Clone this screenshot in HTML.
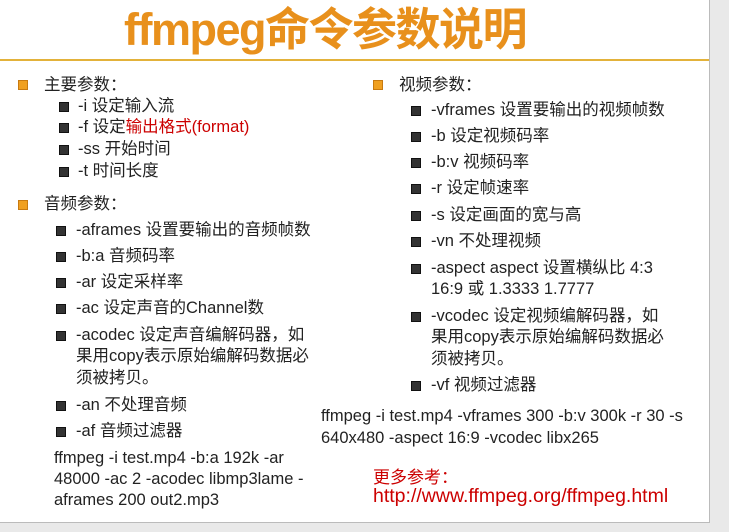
<!DOCTYPE html>
<html><head><meta charset="utf-8"><style>
body{margin:0;width:729px;height:532px;background:#e9e9e9;position:relative;overflow:hidden;font-family:"Liberation Sans","Noto Sans CJK SC",sans-serif;color:#222}
#s{position:absolute;left:0;top:0;width:709px;height:522px;background:#fff;border-right:1px solid #bbb;border-bottom:1px solid #bbb}
.t{position:absolute;white-space:nowrap;font-size:16.5px;line-height:21px}
.ob{position:absolute;width:10px;height:10px;background:#f0a020;border:1px solid #c87a10;box-sizing:border-box}
.bb{position:absolute;width:10px;height:10px;background:#333;border:1px solid #111;box-sizing:border-box}
h1{position:absolute;left:0;width:650px;top:4px;margin:0;text-align:center;font-size:45px;font-weight:bold;color:#e8901c;letter-spacing:-1.5px;line-height:52px}
.line{position:absolute;left:0;top:59px;width:709px;height:2px;background:#e3b23a}
.r{color:#c00}
</style></head><body><div id="s">
<h1>ffmpeg命令参数说明</h1>
<div class="line"></div>

<div class="ob" style="left:18px;top:80px"></div><div class="t" style="left:44px;top:75px">主要参数：</div>
<div class="bb" style="left:59px;top:102px"></div><div class="t" style="left:78px;top:96px">-i 设定输入流</div>
<div class="bb" style="left:59px;top:123px"></div><div class="t" style="left:78px;top:117px">-f 设定<span class="r">输出格式(format)</span></div>
<div class="bb" style="left:59px;top:145px"></div><div class="t" style="left:78px;top:139px">-ss 开始时间</div>
<div class="bb" style="left:59px;top:167px"></div><div class="t" style="left:78px;top:161px">-t 时间长度</div>

<div class="ob" style="left:18px;top:200px"></div><div class="t" style="left:44px;top:194px">音频参数：</div>
<div class="bb" style="left:56px;top:226px"></div><div class="t" style="left:76px;top:220px">-aframes 设置要输出的音频帧数</div>
<div class="bb" style="left:56px;top:252px"></div><div class="t" style="left:76px;top:246px">-b:a 音频码率</div>
<div class="bb" style="left:56px;top:278px"></div><div class="t" style="left:76px;top:272px">-ar 设定采样率</div>
<div class="bb" style="left:56px;top:304px"></div><div class="t" style="left:76px;top:298px">-ac 设定声音的Channel数</div>
<div class="bb" style="left:56px;top:331px"></div><div class="t" style="left:76px;top:325px">-acodec 设定声音编解码器，如</div>
<div class="t" style="left:76px;top:346px">果用copy表示原始编解码数据必</div>
<div class="t" style="left:76px;top:368px">须被拷贝。</div>
<div class="bb" style="left:56px;top:401px"></div><div class="t" style="left:76px;top:395px">-an 不处理音频</div>
<div class="bb" style="left:56px;top:427px"></div><div class="t" style="left:76px;top:421px">-af 音频过滤器</div>
<div class="t" style="left:54px;top:448px">ffmpeg -i test.mp4 -b:a 192k -ar</div>
<div class="t" style="left:54px;top:469px">48000 -ac 2 -acodec libmp3lame -</div>
<div class="t" style="left:54px;top:490px">aframes 200 out2.mp3</div>

<div class="ob" style="left:373px;top:80px"></div><div class="t" style="left:399px;top:75px">视频参数：</div>
<div class="bb" style="left:411px;top:106px"></div><div class="t" style="left:431px;top:100px">-vframes 设置要输出的视频帧数</div>
<div class="bb" style="left:411px;top:132px"></div><div class="t" style="left:431px;top:126px">-b 设定视频码率</div>
<div class="bb" style="left:411px;top:158px"></div><div class="t" style="left:431px;top:152px">-b:v 视频码率</div>
<div class="bb" style="left:411px;top:184px"></div><div class="t" style="left:431px;top:178px">-r 设定帧速率</div>
<div class="bb" style="left:411px;top:211px"></div><div class="t" style="left:431px;top:205px">-s 设定画面的宽与高</div>
<div class="bb" style="left:411px;top:237px"></div><div class="t" style="left:431px;top:231px">-vn 不处理视频</div>
<div class="bb" style="left:411px;top:264px"></div><div class="t" style="left:431px;top:258px">-aspect aspect 设置横纵比 4:3</div>
<div class="t" style="left:431px;top:279px">16:9 或 1.3333 1.7777</div>
<div class="bb" style="left:411px;top:312px"></div><div class="t" style="left:431px;top:306px">-vcodec 设定视频编解码器，如</div>
<div class="t" style="left:431px;top:327px">果用copy表示原始编解码数据必</div>
<div class="t" style="left:431px;top:349px">须被拷贝。</div>
<div class="bb" style="left:411px;top:381px"></div><div class="t" style="left:431px;top:375px">-vf 视频过滤器</div>
<div class="t" style="left:321px;top:406px">ffmpeg -i test.mp4 -vframes 300 -b:v 300k -r 30 -s</div>
<div class="t" style="left:321px;top:428px">640x480 -aspect 16:9 -vcodec libx265</div>
<div class="t r" style="left:373px;top:467px;font-size:17px">更多参考：</div>
<div class="t r" style="left:373px;top:486px;font-size:19.5px">http://www.ffmpeg.org/ffmpeg.html</div>
</div></body></html>
